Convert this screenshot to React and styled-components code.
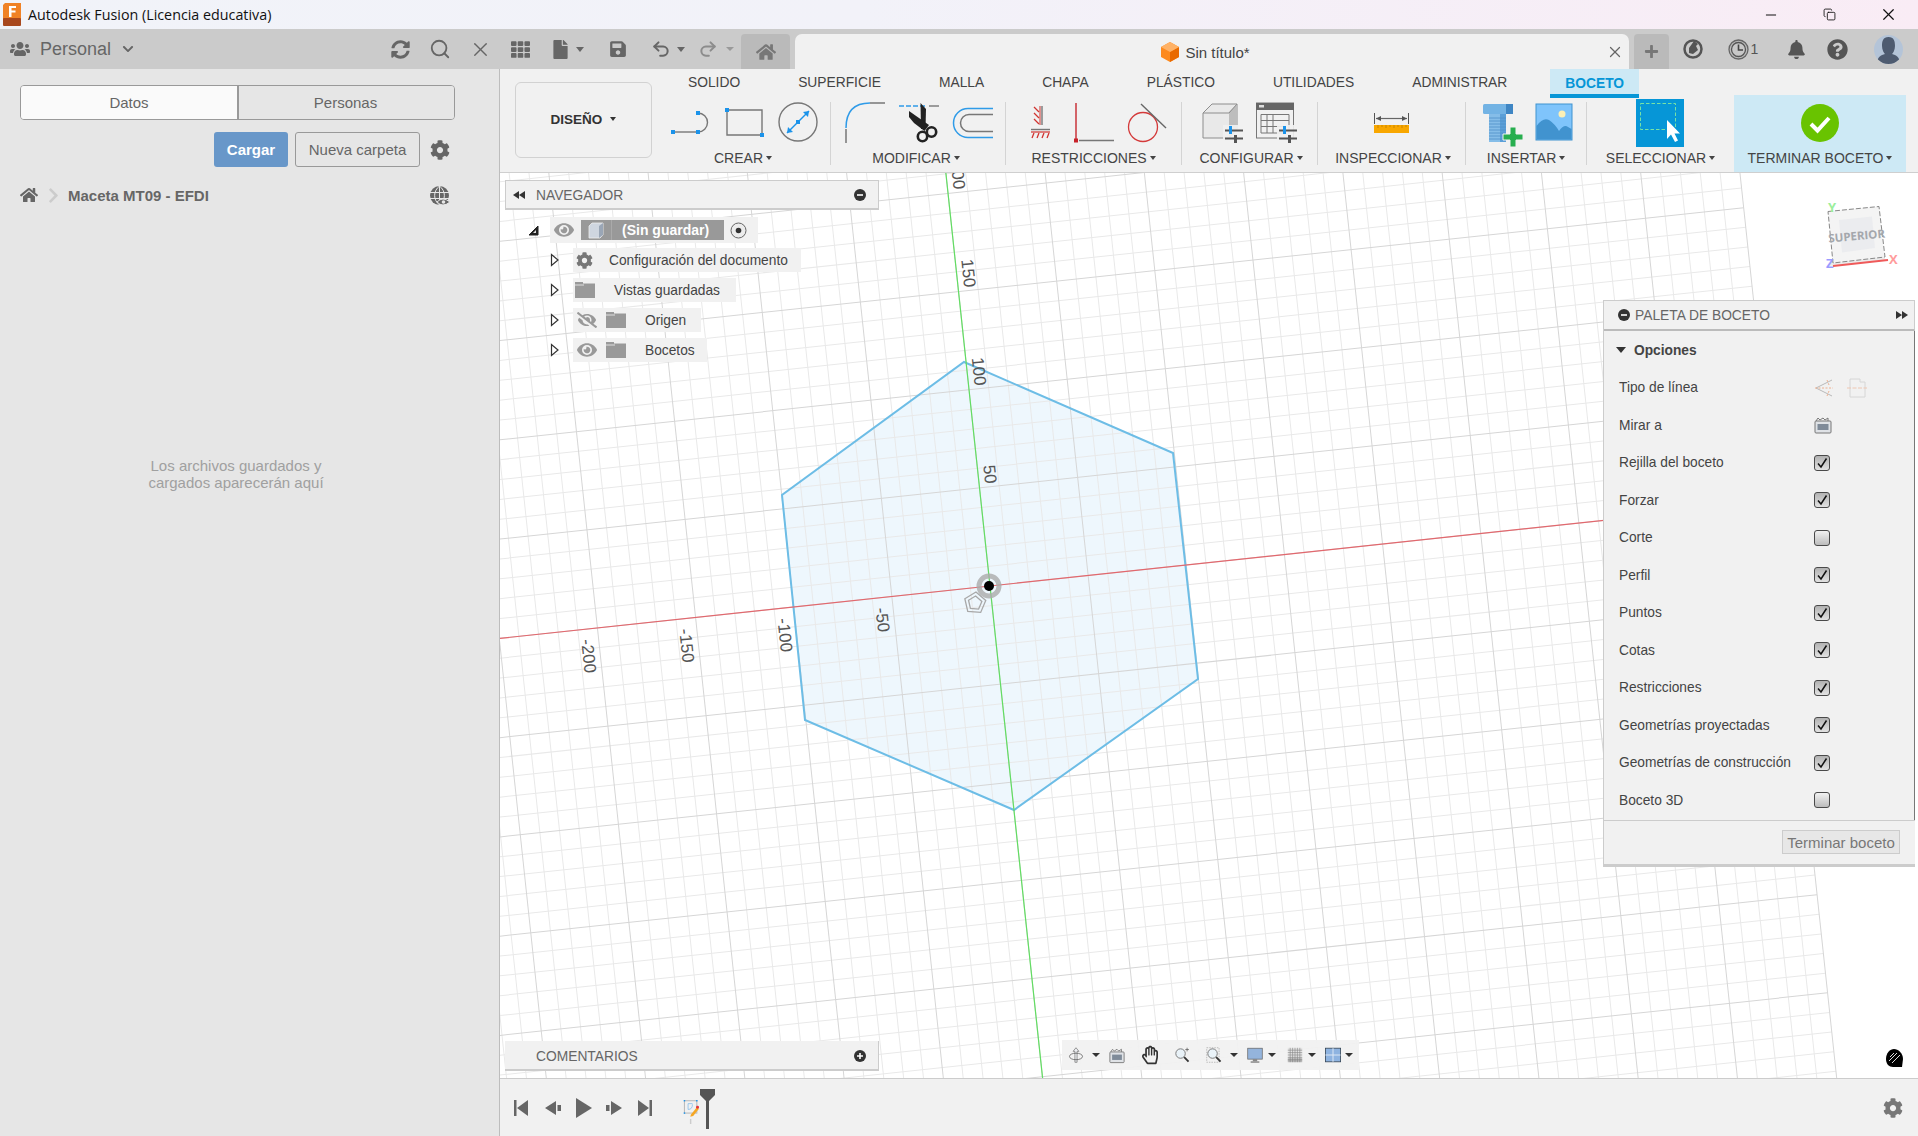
import React from 'react';
import styled, { createGlobalStyle } from 'styled-components';
import { FaUsers, FaSyncAlt, FaCog, FaHome, FaChevronDown, FaChevronRight, FaEye, FaEyeSlash, FaBell, FaQuestionCircle, FaFile, FaSave, FaPlus, FaTh, FaRegHandPaper } from 'react-icons/fa';
import { Search, X, Undo2, Redo2, Minus, Copy } from 'lucide-react';

const Global = createGlobalStyle`
  html, body { margin: 0; padding: 0; width: 1918px; height: 1136px; overflow: hidden; background: #f1f1f1; }
  body { font-family: "Liberation Sans", Arial, sans-serif; color: #444; }
  * { box-sizing: border-box; }
`;

const Page = styled.div`
  width: 1918px; height: 1136px; display: flex; flex-direction: column; overflow: hidden;
`;

/* ---------- title bar ---------- */
const TitleBar = styled.header`
  height: 29px; flex: none; display: flex; align-items: center; padding-left: 3px;
  background: linear-gradient(90deg, #f1f3f9 0%, #f2f2f9 45%, #f9ecf5 100%);
`;
const AppTitle = styled.span`
  margin-left: 7px; font-family: "Open Sans", sans-serif; font-size: 14.3px; color: #111; flex: 1; white-space: nowrap;
`;
const WinButton = styled.span`
  width: 59px; height: 29px; display: flex; align-items: center; justify-content: center; color: #111;
`;

/* ---------- top bar ---------- */
const TopBar = styled.div`
  height: 40px; flex: none; display: flex; background: #cbcbcb; color: #666;
`;
const AccountArea = styled.div`
  width: 500px; flex: none; display: flex; align-items: center; padding-left: 10px;
`;
const AccountName = styled.span`
  font-size: 18px; color: #666; margin-left: 10px; width: 82px;
`;
const AccountTools = styled.div`
  margin-left: auto; display: flex; align-items: center; height: 100%;
`;
const Slot = styled.div`
  width: ${p => p.$w}px; flex: none; height: 100%; display: flex; align-items: center; justify-content: center;
  gap: ${p => p.$gap || 0}px; color: ${p => p.$color || '#666'}; font-size: 14px;
  padding-left: ${p => p.$pl || 0}px; padding-right: ${p => p.$pr || 0}px;
`;
const Caret = styled.i`
  display: inline-block; flex: none; width: 0; height: 0;
  border-left: ${p => p.$s || 4}px solid transparent; border-right: ${p => p.$s || 4}px solid transparent;
  border-top: ${p => (p.$s || 4) * 1.2}px solid ${p => p.$c || '#555'};
`;
const SmallHomeTab = styled.div`
  width: 49px; margin: 5px 5px 0 6px; background: #bababa; border-radius: 4px 4px 0 0;
  display: flex; align-items: center; justify-content: center; color: #777;
`;
const DocTab = styled.div`
  width: 834px; margin-top: 5px; background: #f1f1f1; border-radius: 7px 7px 0 0; display: flex; align-items: center;
  position: relative; justify-content: center;
`;
const DocTitle = styled.span`
  font-size: 15px; color: #444; display: flex; align-items: center; gap: 6px; padding: 1px 13px 0 0;
`;
const DocClose = styled.span`
  position: absolute; right: 5px; top: 9px; color: #666; display: flex;
`;
const PlusTab = styled.div`
  width: 35px; margin: 5px 0 0 5px; background: #bababa; border-radius: 4px 4px 0 0; color: #777;
  display: flex; align-items: center; justify-content: center;
`;

/* ---------- body ---------- */
const Body = styled.div`
  flex: 1; display: grid; grid-template-columns: 500px 1fr; min-height: 0;
`;
const SidePanel = styled.aside`
  background: #e6e6e6; border-right: 1px solid #bdbdbd; padding: 16px 0 0 20px; display: flex; flex-direction: column; position: relative;
`;
const Segments = styled.div`
  width: 435px; height: 35px; display: flex; border: 1px solid #999; border-radius: 4px; overflow: hidden;
`;
const Segment = styled.div`
  flex: ${p => (p.$active ? '0 0 216px' : '1')}; display: flex; align-items: center; justify-content: center; font-size: 15px; color: #666;
  background: ${p => (p.$active ? '#fafafa' : '#e6e6e6')};
  & + & { border-left: 2px solid #999; padding-right: 2px; }
`;
const ActionRow = styled.div`
  margin-top: 12px; height: 35px; display: flex; align-items: center; padding-left: 194px; color: #666;
`;
const PrimaryButton = styled.button`
  width: 74px; height: 35px; border: 0; border-radius: 3px; background: #6897c9; color: #fff; font: bold 15px "Liberation Sans", sans-serif;
`;
const GhostButton = styled.button`
  width: 125px; height: 35px; margin: 0 10px 0 7px; border: 1px solid #999; border-radius: 3px; background: #e6e6e6; color: #666;
  font: 15px "Liberation Sans", sans-serif;
`;
const Crumbs = styled.div`
  margin-top: 17px; height: 22px; display: flex; align-items: center; color: #666; padding-right: 49px;
`;
const CrumbText = styled.span`
  font-weight: bold; font-size: 15px; margin-left: 6px; color: #666; flex: 1;
`;
const CrumbChevron = styled.span`
  margin-left: 7px; color: #ccc; display: flex;
`;
const GlobeSlot = styled.span`
  display: flex; padding-top: 2px;
`;
const EmptyText = styled.p`
  margin: 251px 0 0 -20px; width: 472px; text-align: center; font-size: 15px; line-height: 17px; color: #a0a0a0;
`;

const Main = styled.main`
  display: flex; flex-direction: column; min-width: 0; min-height: 0;
`;

/* ---------- ribbon ---------- */
const Ribbon = styled.div`
  height: 104px; flex: none; display: flex; background: #f1f1f1; border-bottom: 1px solid #cfcfcf; padding-left: 15px;
`;
const DesignButton = styled.div`
  width: 137px; height: 76px; margin-top: 13px; flex: none; border: 1px solid #d2d2d2; border-radius: 6px; background: #f1f1f1;
  display: flex; align-items: center; justify-content: center; gap: 8px; font-weight: bold; font-size: 13.5px; color: #333; padding-bottom: 2px;
`;
const RibbonRight = styled.div`
  margin-left: 8px; display: flex; flex-direction: column; flex: 1;
`;
const TabRow = styled.div`
  height: 29px; flex: none; display: flex; gap: 28px; padding-left: 13px;
`;
const RibbonTab = styled.div`
  padding: ${p => (p.$active ? '3px 15px 0' : '0 15px 2px')}; font-size: 13.8px; display: flex; align-items: center;
  color: ${p => (p.$active ? '#0696d7' : '#444')}; font-weight: ${p => (p.$active ? 'bold' : 'normal')};
  background: ${p => (p.$active ? '#cde9f5' : 'transparent')};
  border-bottom: ${p => (p.$active ? '4px solid #0696d7' : '0')};
`;
const ToolRow = styled.div`
  display: flex; flex: 1; align-items: flex-start;
`;
const ToolGroup = styled.div`
  flex: 0 0 ${p => p.$w}px; height: 74px; display: flex; flex-direction: column;
`;
const FinishGroup = styled(ToolGroup)`
  background: #cde9f5; margin-top: -3px; height: 77px; padding-top: 3px;
`;
const ToolIcons = styled.div`
  height: 50px; display: flex; gap: ${p => p.$gap || 0}px; padding-left: ${p => p.$pad || 0}px;
  justify-content: ${p => (p.$center ? 'center' : 'flex-start')};
`;
const ToolLabel = styled.div`
  height: 20px; display: flex; align-items: center; justify-content: center; gap: 3px; font-size: 14px; color: #444; white-space: nowrap;
  padding-left: ${p => p.$pl || 0}px; padding-right: ${p => p.$pr || 0}px;
`;
const ToolSep = styled.div`
  flex: 0 0 1px; height: 63px; margin-top: 4px; background: #d4d4d4;
`;

/* ---------- canvas ---------- */
const Canvas = styled.div`
  flex: 1; position: relative; overflow: hidden; background: #fff; min-height: 0;
`;
const GridDrawing = styled.svg`
  position: absolute; inset: 0; width: 100%; height: 100%;
`;
const AxisText = styled.text`
  font-family: "Liberation Sans", sans-serif; font-size: 17px; fill: #555;
`;
const PanelHeader = styled.div`
  height: 30px; display: flex; align-items: center; background: #f1f1f1; border: 1px solid #ccc; border-bottom-width: 2px;
  font-size: 13.8px; color: #666; padding: 1px 12px 0 7px;
`;
const HeaderText = styled.span`
  flex: 1; margin-left: ${p => p.$ml || 0}px;
`;
const NavPanel = styled.section`
  position: absolute; left: 5px; top: 7px; width: 374px;
`;
const Tree = styled.div`
  padding-top: 5px; display: flex; flex-direction: column;
`;
const TreeRow = styled.div`
  height: 30px; display: flex; align-items: center; padding-left: ${p => p.$indent}px;
`;
const Expander = styled.span`
  width: ${p => p.$w}px; flex: none; display: flex; align-items: center;
`;
const TreeItem = styled.div`
  height: ${p => p.$h || 24}px; display: flex; align-items: center; background: #f1f1f1; font-size: 13.75px; color: #444; padding: 0 ${p => p.$pr || 10}px 0 0;
`;
const TreeSlot = styled.span`
  width: ${p => p.$w}px; flex: none; display: flex; align-items: center; justify-content: center; color: ${p => p.$c || '#999'};
  padding-right: ${p => p.$pr || 0}px;
`;
const RootChip = styled.div`
  height: 20px; display: flex; align-items: center; background: #999; color: #fff; font-weight: bold; font-size: 14px;
`;
const RootCube = styled.span`
  width: 31px; height: 100%; display: flex; align-items: center; justify-content: center; border-right: 1px solid #aaa;
`;
const RootName = styled.span`
  padding: 0 15px 0 10px;
`;
const CommentPanel = styled.section`
  position: absolute; left: 5px; bottom: 7px; width: 374px; height: 30px;
`;
const CommentHeader = styled(PanelHeader)`
  border-top: 0; border-left: 0; padding: 2px 12px 0 31px;
`;
const ViewBar = styled.div`
  position: absolute; left: 562px; bottom: 8px; width: 297px; height: 30px; background: rgba(241,241,241,.95);
  display: flex; align-items: center; padding-left: 6px;
`;
const ViewSlot = styled.span`
  width: 16px; margin-left: ${p => p.$ml || 0}px; flex: none; display: flex; align-items: center; justify-content: center;
`;
const ViewCube = styled.svg`
  position: absolute; left: 1315px; top: 27px; width: 90px; height: 75px;
`;
const CubeText = styled.text`
  font-family: "Open Sans", sans-serif; font-size: 11.5px; font-weight: 700; fill: #a4a7ac;
`;
const AxisLetter = styled.text`
  font-family: "Open Sans", sans-serif; font-size: 13px; font-weight: 700; fill: ${p => p.$c};
`;
const CornerMark = styled.svg`
  position: absolute; right: 14px; bottom: 10px; width: 20px; height: 20px;
`;
const Palette = styled.section`
  position: absolute; left: 1103px; top: 127px; width: 312px; background: #f1f1f1; display: flex; flex-direction: column;
  border-left: 1px solid #ccc; border-bottom: 3px solid #ccc;
`;
const PaletteHeader = styled(PanelHeader)`
  height: 31px; padding: 0 6px 0 14px; border-left: 0; border-bottom: 2px solid #bbb;
`;
const PaletteBody = styled.div`
  border-right: 1px solid #777; padding: .5px 0 .5px;
`;
const PRow = styled.div`
  height: 37.5px; display: flex; align-items: center; padding-left: 15px; font-size: 13.75px; color: #444; position: relative;
`;
const OptionsRow = styled(PRow)`
  font-weight: bold; gap: 8px; padding-left: 12px; color: #444;
`;
const PLabel = styled.span`
  width: 195px; flex: none; white-space: nowrap;
`;
const PControls = styled.span`
  display: flex; align-items: center; gap: 13px;
`;
const Check = styled.span`
  width: 16px; height: 16px; border: 1.5px solid #4a4a4a; border-radius: 3px; display: flex; align-items: center; justify-content: center;
  background: ${p => (p.$on ? 'linear-gradient(#b2b2b2, #e2e2e2)' : 'linear-gradient(#f2f2f2, #bcbcbc)')};
`;
const PFooter = styled.div`
  height: 44px; border-top: 1px solid #ccc; display: flex; align-items: center; justify-content: flex-end; padding-right: 15px;
`;
const FinishButton = styled.button`
  width: 118px; height: 24px; padding: 0; background: #e7e7e7; border: 1px solid #ccc; color: #777; font: 15px "Liberation Sans", sans-serif;
`;

/* ---------- timeline ---------- */
const Timeline = styled.div`
  height: 58px; flex: none; background: #f1f1f1; border-top: 1px solid #ccc; display: flex; align-items: center; padding-left: 10px; position: relative; color: #666;
`;
const TimeSlot = styled.span`
  width: ${p => p.$w}px; flex: none; display: flex; align-items: center; justify-content: center;
`;
const TimelineGear = styled.span`
  margin-left: auto; margin-right: 15px; display: flex; color: #777;
`;

/* ---------- drawings ---------- */
const Ic = ({ x, w, children, y = 2, h = 50 }) => (
  <svg width={w} height={h} viewBox={`${x} ${y} ${w} ${h}`} fill="none">{children}</svg>
);
const Sq = ({ x, y, s = 4, c = '#1b93ea' }) => <rect x={x - s / 2} y={y - s / 2} width={s} height={s} fill={c} />;

const IconPolyline = () => (
  <Ic x={5} w={44}>
    <path d="M8 36H33" stroke="#777" strokeWidth="1.4" />
    <path d="M33 17a9.5 9.5 0 0 1 0 19" stroke="#777" strokeWidth="1.4" />
    <Sq x={8} y={36} /><Sq x={33} y={36} /><Sq x={33} y={17} />
  </Ic>
);
const IconRect = () => (
  <Ic x={59} w={44}>
    <path d="M62 14H97V39H62Z" stroke="#777" strokeWidth="1.4" />
    <Sq x={62} y={14} /><Sq x={97} y={39} />
  </Ic>
);
const IconCircle = () => (
  <Ic x={113} w={44}>
    <circle cx="133" cy="26" r="19" stroke="#777" strokeWidth="1.4" />
    <path d="M122 37 144 15" stroke="#1b93ea" strokeWidth="1.4" />
    <path d="M122 37l1-6 5 5zM144 15l-1 6-5-5z" fill="#1b93ea" />
    <Sq x={133} y={26} />
  </Ic>
);
const IconFillet = () => (
  <Ic x={180} w={44}>
    <path d="M182 32Q182 7 206 7" stroke="#2f9be8" strokeWidth="1.5" />
    <path d="M182 33V47M206 7H221" stroke="#777" strokeWidth="1.5" />
  </Ic>
);
const IconScissors = () => (
  <Ic x={234} w={44}>
    <path d="M235 10H261" stroke="#2f9be8" strokeWidth="1.4" strokeDasharray="5 2" />
    <path d="M265 10H275" stroke="#777" strokeWidth="1.4" />
    <path d="M256.500 7 L262 13 L261.500 33 L257 33 Z" fill="#222" />
    <path d="M245 15 L265 29 L260.500 35 L250 27 L245 21 Z" fill="#222" />
    <circle cx="258.500" cy="40.500" r="4.700" stroke="#222" strokeWidth="2.600" />
    <circle cx="267.500" cy="36" r="4.700" stroke="#222" strokeWidth="2.600" />
  </Ic>
);
const IconOffset = () => (
  <Ic x={288} w={44}>
    <path d="M329 12.5H304a14.500 14.500 0 0 0 0 29H329" stroke="#2f9be8" strokeWidth="1.5" />
    <path d="M329 18.500H305a8.500 8.500 0 0 0 0 17H329" stroke="#777" strokeWidth="1.5" />
  </Ic>
);
const IconHatch = () => (
  <Ic x={361} w={40}>
    <path d="M378 10V29" stroke="#777" strokeWidth="1.4" />
    <path d="M376 10V29" stroke="#d0332f" strokeWidth="1" />
    <path d="M370 11l5 5M370 17l5 5M370 23l5 5" stroke="#d0332f" strokeWidth="1.3" />
    <path d="M367 33.500H386" stroke="#777" strokeWidth="1.4" />
    <path d="M367 36H386" stroke="#d0332f" strokeWidth="1.2" />
    <path d="M370 37l-2 5M375 37l-2 5M380 37l-2 5M385 37l-2 5" stroke="#d0332f" strokeWidth="1.3" />
  </Ic>
);
const IconPerp = () => (
  <Ic x={407} w={46}>
    <path d="M412 7V43" stroke="#c8333a" strokeWidth="1.5" />
    <path d="M415 44.500H450" stroke="#777" strokeWidth="1.5" />
    <Sq x={412} y={44.5} c="#c8222a" />
  </Ic>
);
const IconTangent = () => (
  <Ic x={459} w={46}>
    <circle cx="479" cy="31" r="14.500" stroke="#d43a3a" strokeWidth="1.3" />
    <path d="M477 8 502 32" stroke="#666" strokeWidth="1.4" />
  </Ic>
);
const Sliders = ({ x, y }) => (
  <g>
    <rect x={x - 2} y={y - 4} width="21" height="18" fill="#f1f1f1" opacity=".9" />
    <path d={`M${x} ${y + 1.500}H${x + 18}M${x} ${y + 9.500}H${x + 18}`} stroke="#555" strokeWidth="2.2" />
    <rect x={x + 4} y={y - 3} width="3" height="8" fill="#1b93ea" />
    <rect x={x + 9} y={y + 6} width="3" height="8" fill="#555" />
  </g>
);
const IconSolid = () => (
  <Ic x={5} w={45}>
    <path d="M9 17 18 8H43V33L35 42H9Z" fill="#e9e9e9" stroke="#8d8d8d" strokeWidth="1" />
    <path d="M35 16V42L43 33V8Z" fill="#bdbdbd" />
    <path d="M9 17H35L43 8" stroke="#8d8d8d" fill="none" />
    <Sliders x={31} y={33} />
  </Ic>
);
const IconTable = () => (
  <Ic x={60} w={45}>
    <rect x="62.500" y="7" width="37" height="35" fill="#f1f1f1" stroke="#777" />
    <rect x="62" y="7" width="38" height="7" fill="#666" />
    <rect x="65" y="9" width="5" height="2.500" fill="#ddd" />
    <path d="M67 18.500H95V37M67 18.500V37H90M67 24.500H95M67 30.500H90M73 18.500V37M79 18.500V37" stroke="#777" strokeWidth="1" />
    <Sliders x={85} y={33} />
  </Ic>
);
const IconRuler = () => (
  <Ic x={177} w={42}>
    <path d="M180.500 17V28M214.500 17V28" stroke="#555" />
    <path d="M182 22.500H213" stroke="#666" strokeWidth="1.2" />
    <path d="M182 22.500l5-2.500v5zM213 22.500l-5-2.500v5z" fill="#555" />
    <rect x="180" y="29" width="35" height="8" fill="#f8a700" />
    <path d="M184 29v3M188 29v2M192 29v3M196 29v2M200 29v3M204 29v2M208 29v3M212 29v2" stroke="#b87a00" strokeWidth=".7" />
  </Ic>
);
const IconBolt = () => (
  <Ic x={287} w={43}>
    <rect x="289" y="8" width="30" height="10" rx="1.500" fill="#73b3e4" />
    <rect x="312" y="8" width="7" height="10" fill="#3f86c4" />
    <rect x="295" y="18" width="17" height="28" fill="#85bde8" />
    <rect x="306" y="18" width="6" height="28" fill="#5b9fd8" />
    <path d="M295 22h17M295 25h17M295 28h17M295 31h17M295 34h17M295 37h17M295 40h17M295 43h17" stroke="#4f8fc8" strokeWidth=".8" />
    <path d="M309 38h7v-7h6v7h7v6h-7v7h-6v-7h-7z" fill="#27ae4f" stroke="#f1f1f1" />
  </Ic>
);
const IconImage = () => (
  <Ic x={338} w={42}>
    <rect x="341" y="8" width="36" height="36" fill="#7fc4fb" stroke="#4193cf" />
    <circle cx="367" cy="18" r="3.500" fill="#fdf0b5" />
    <path d="M341.500 43.500V30Q348 21 354 24Q360 28 364 35Q369 28 373 31L376.500 33V43.500Z" fill="#4193cf" />
  </Ic>
);
const IconSelect = () => (
  <Ic x={441} w={48}>
    <rect x="441" y="3" width="48" height="48" fill="#0696d7" />
    <rect x="445.500" y="7.500" width="35" height="26" stroke="#77e2a5" strokeDasharray="3.500 2" />
    <path d="M472 24V43L476 38.500L480 46L483 44.500L479.500 37.500H485Z" fill="#fff" />
  </Ic>
);
const IconFinish = () => (
  <svg width="42" height="50" viewBox="0 0 42 50" fill="none">
    <circle cx="21" cy="25" r="19" fill="#69c300" />
    <path d="M12 26l6.500 6.500L30 20" stroke="#fff" strokeWidth="4" />
  </svg>
);
const CubeGlyph = () => (
  <svg width="18" height="20" viewBox="0 0 18 20">
    <path d="M9 0 18 5V15L9 20 0 15V5Z" fill="#fd8a1e" />
    <path d="M9 10 18 5V15L9 20Z" fill="#e96a00" />
    <path d="M9 0 18 5 9 10 0 5Z" fill="#ffb266" />
  </svg>
);
const AppLogo = () => (
  <svg width="18" height="23" viewBox="0 0 18 23">
    <path d="M2 0H18V17H0V2Z" fill="#f08226" />
    <rect y="15" width="18" height="8" rx="1" fill="#a8481e" />
    <path d="M6 3h7v2H8.500v2.500H12.500v2H8.500V14H6Z" fill="#fff" />
  </svg>
);
const MinusDot = ({ plus }) => (
  <svg width="12" height="12" viewBox="0 0 12 12">
    <circle cx="6" cy="6" r="6" fill="#333" />
    <path d={plus ? 'M3 6H9M6 3V9' : 'M3 6H9'} stroke="#fff" strokeWidth="1.600" />
  </svg>
);
const DoubleArrow = ({ dir }) => (
  <svg width="12" height="8" viewBox="0 0 12 8">
    <path d={dir === 'l' ? 'M6 0V8L0 4ZM12 0V8L6 4Z' : 'M0 0V8L6 4ZM6 0V8L12 4Z'} fill="#333" />
  </svg>
);
const TriOpen = () => (
  <svg width="10" height="14" viewBox="0 0 10 14"><path d="M1.500 1.500V12.500L8 7Z" fill="#fff" stroke="#333" strokeWidth="1.200" /></svg>
);
const TriCorner = () => (
  <svg width="11" height="11" viewBox="0 0 11 11"><path d="M10 1V10H1Z" fill="#222" stroke="#222" /><path d="M8 5V8H5Z" fill="#ddd" /></svg>
);
const Radio = () => (
  <svg width="17" height="17" viewBox="0 0 17 17"><circle cx="8.500" cy="8.500" r="7.500" fill="#ececec" stroke="#666" /><circle cx="8.500" cy="8.500" r="2.800" fill="#333" /></svg>
);
const MiniCube = () => (
  <svg width="16" height="17" viewBox="0 0 16 17">
    <path d="M1 4 4 1H15V13L12 16H1Z" fill="#cfd6e0" stroke="#eee" strokeWidth=".8" />
    <path d="M11 4V16L15 13V1Z" fill="#9aa6b6" />
  </svg>
);
const Folder = () => (
  <svg width="20" height="16" viewBox="0 0 20 16"><path d="M0 0H8V1.500H20V16H0Z" fill="#999" /><path d="M0 3H9" stroke="#f1f1f1" strokeWidth=".8" /></svg>
);
const LookAt = ({ size = 18 }) => (
  <svg width={size} height={size} viewBox="0 0 18 18">
    <path d="M2 5 4 2 6 4 9 2 11 4 14 2V5" stroke="#777" strokeWidth="1" fill="none" />
    <rect x="1" y="5" width="16" height="12" rx="1" fill="#dfe2e6" stroke="#777" />
    <rect x="3.500" y="8" width="11" height="6" fill="#7f8b99" />
  </svg>
);
const LineTypeA = () => (
  <svg width="20" height="20" viewBox="0 0 20 20" fill="none">
    <path d="M18 2 2 10 18 18" stroke="#b9b9b9" strokeWidth="1" />
    <path d="M1 10H19M13 2 15 7M13 18 15 13" stroke="#eeb08f" strokeWidth="1" strokeDasharray="2 1.500" />
  </svg>
);
const LineTypeB = () => (
  <svg width="20" height="20" viewBox="0 0 20 20" fill="none">
    <path d="M3 1H13V4H18V19H3Z" stroke="#d6d6d6" strokeWidth="1" />
    <path d="M0 10H20" stroke="#efc7b2" strokeWidth="1" strokeDasharray="4 1.500" />
  </svg>
);
const Tick = () => (
  <svg width="12" height="12" viewBox="0 0 12 12" fill="none"><path d="M2 6.500 5 10 10.500 1.500" stroke="#111" strokeWidth="1.500" /></svg>
);
const JobIcon = () => (
  <svg width="20" height="22" viewBox="0 0 20 22" fill="none">
    <circle cx="10" cy="11" r="8.500" stroke="#555" strokeWidth="2.500" />
    <path d="M6 10 11 3 15 6 13 8 15 12 10 16 6 15Z" fill="#555" />
  </svg>
);
const ClockIcon = () => (
  <svg width="21" height="21" viewBox="0 0 21 21" fill="none">
    <circle cx="10.500" cy="10.500" r="9.500" fill="#bcbcbc" stroke="#666" strokeWidth="1.300" />
    <circle cx="10.500" cy="10.500" r="7" fill="#c8c8c8" stroke="#555" strokeWidth="1.300" />
    <path d="M10.500 5.500V11H15" stroke="#444" strokeWidth="1.600" />
  </svg>
);
const Avatar = () => (
  <svg width="29" height="29" viewBox="0 0 29 29">
    <defs><clipPath id="av"><circle cx="14.500" cy="14.500" r="14.500" /></clipPath></defs>
    <g clipPath="url(#av)">
      <rect width="29" height="29" fill="#b4c4d8" />
      <path d="M14.500 2C9 2 8 6 8 11c0 4 2 7 3 8-4 1-8 3-8 10h23c0-7-4-9-8-10 1-1 3-4 3-8 0-5-1-9-6.500-9Z" fill="#4e5b70" />
    </g>
  </svg>
);
const GlobeEye = () => (
  <svg width="20" height="21" viewBox="0 0 20 21">
    <circle cx="9.500" cy="9.500" r="9.500" fill="#666" />
    <path d="M0 6.500H19M0 12.500H19M9.500 0V19M9.500 0C3 5 3 14 9.500 19M9.500 0C16 5 16 14 9.500 19" stroke="#e6e6e6" strokeWidth="1" fill="none" />
    <path d="M7 16q5.500-6 13 0q-7.500 6-13 0Z" fill="#666" stroke="#e6e6e6" />
    <circle cx="13.500" cy="16" r="1.800" fill="#e6e6e6" />
  </svg>
);
const StepIcon = ({ d, w = 16, h = 16, fill = '#666' }) => (
  <svg width={w} height={h} viewBox={`0 0 ${w} ${h}`}><path d={d} fill={fill} /></svg>
);
const SketchStamp = () => (
  <svg width="22" height="44" viewBox="0 0 22 44" fill="none">
    <rect x="2" y="12" width="17" height="17" stroke="#bbb" strokeWidth="1.500" />
    <path d="M7 16H13M7 16V24" stroke="#7ab8ea" strokeWidth="1" /><path d="M7 24Q13 24 13 17" stroke="#7ab8ea" />
    <Sq x={2} y={12} s={2} /><Sq x={19} y={12} s={2} /><Sq x={2} y={29} s={2} />
    <path d="M11 31 19 21 22 23 14 33 10 34Z" fill="#f5a623" />
    <circle cx="20" cy="21" r="2" fill="#e5343a" />
    <path d="M10.500 37V44" stroke="#ccc" strokeWidth="2" />
  </svg>
);
const Marker = () => (
  <svg width="15" height="40" viewBox="0 0 15 40"><path d="M0 0H15V6L9 12V40H6V12L0 6Z" fill="#555" /></svg>
);
const MarkerSlot = styled(TimeSlot)`
  margin-top: 3px;
`;
const OrbitIcon = () => (
  <svg width="22" height="22" viewBox="0 0 22 22" fill="none">
    <path d="M11 1 7 6H9.500V21H12.500V6H15Z" fill="#eef0f3" stroke="#666" strokeWidth=".9" />
    <ellipse cx="11" cy="13" rx="9" ry="4.500" stroke="#555" />
  </svg>
);
const ZoomIcon = ({ plus, frame }) => (
  <svg width="22" height="22" viewBox="0 0 22 22" fill="none">
    {frame && <rect x="1" y="1" width="17" height="20" stroke="#aaa" strokeDasharray="2 1.500" />}
    <circle cx="9" cy="9" r="6.500" fill="#e9f2f8" stroke="#777" strokeWidth="1.300" />
    <path d="M14 14 20 20" stroke="#333" strokeWidth="2.600" />
    {plus && <path d="M18 1V6M15.500 3.500H20.500" stroke="#555" />}
  </svg>
);
const DisplayIcon = () => (
  <svg width="20" height="21" viewBox="0 0 22 22">
    <rect x="1" y="1" width="20" height="15" fill="#94b4dc" stroke="#666" />
    <rect x="8" y="16" width="6" height="3" fill="#888" /><rect x="5" y="19" width="12" height="2" fill="#888" />
  </svg>
);
const GridIcon = () => (
  <svg width="19" height="20" viewBox="0 0 20 20" fill="none">
    <rect x="1" y="1" width="18" height="18" fill="#e4e4e4" />
    <path d="M1 4H19M1 7H19M1 10H19M1 13H19M1 16H19M4 1V19M7 1V19M10 1V19M13 1V19M16 1V19" stroke="#888" strokeWidth=".8" />
    <rect x="1" y="14" width="18" height="5" fill="#777" opacity=".4" />
  </svg>
);
const ViewsIcon = () => (
  <svg width="19" height="18" viewBox="0 0 20 20">
    <rect x=".5" y="1.500" width="19" height="17" fill="#8eb3e0" stroke="#345" />
    <path d="M10 1.500V18.500M.5 10H19.500" stroke="#dfe9f5" strokeWidth="1.200" />
  </svg>
);

/* ---------- scene ---------- */
const ORIGIN = { x: 490, y: 413 };
const TILT = -6.1;
const MINOR = 19.74;
const EXT = 40;
const range = Array.from({ length: EXT * 2 + 1 }, (_, i) => i - EXT);
const HEX = [[964, 362], [1173, 453], [1198, 679], [1014, 810], [805, 720], [782, 495]]
  .map(([x, y]) => `${x - 500},${y - 173}`).join(' ');

const Scene = () => {
  const lim = EXT * MINOR;
  const ticksY = [50, 100, 150, 200];
  const ticksX = [-50, -100, -150, -200];
  return (
    <GridDrawing viewBox="0 0 1418 905">
      <polygon points={HEX} fill="#eef7fd" />
      <g transform={`translate(${ORIGIN.x} ${ORIGIN.y}) rotate(${TILT})`}>
        {range.filter(i => i % 5 !== 0).map(i => (
          <g key={i} stroke="#e9e9e9" strokeWidth="1">
            <line x1={i * MINOR} x2={i * MINOR} y1={-lim} y2={lim} />
            <line y1={i * MINOR} y2={i * MINOR} x1={-lim} x2={lim} />
          </g>
        ))}
        {range.filter(i => i % 5 === 0).map(i => (
          <g key={i} stroke="#d6d6d6" strokeWidth="1">
            <line x1={i * MINOR} x2={i * MINOR} y1={-lim} y2={lim} />
            <line y1={i * MINOR} y2={i * MINOR} x1={-lim} x2={lim} />
          </g>
        ))}
      </g>
      <polygon points={HEX} fill="none" stroke="#6dbde6" strokeWidth="2" />
      <g transform={`translate(${ORIGIN.x} ${ORIGIN.y}) rotate(${TILT})`}>
        <line x1={-lim} x2={lim} y1="0" y2="0" stroke="#e2686e" strokeWidth="1.200" />
        <line y1={-lim} y2={lim} x1="0" x2="0" stroke="#62dd62" strokeWidth="1.200" />
        {ticksY.map(t => (
          <AxisText key={t} textAnchor="end" transform={`translate(6 ${-t * 1.974 - 3}) rotate(90)`}>{t}</AxisText>
        ))}
        {ticksX.map(t => (
          <AxisText key={t} transform={`translate(${t * 1.974 - 17.5} 10) rotate(90)`}>{t}</AxisText>
        ))}
      </g>
      <circle cx={ORIGIN.x - 1} cy={ORIGIN.y} r="10" fill="none" stroke="#aaa" strokeWidth="5" opacity=".8" />
      <circle cx={ORIGIN.x - 1} cy={ORIGIN.y} r="5" fill="#000" />
      <g transform={`translate(${975 - 500} ${603 - 173}) rotate(5)`} fill="none" stroke="#a8a8a8" strokeWidth="1.300">
        <polygon points="0,-11 10.500,-3.400 6.500,8.900 -6.500,8.900 -10.500,-3.400" />
        <polygon points="0,-7 6.700,-2.200 4.100,5.700 -4.100,5.700 -6.700,-2.200" />
      </g>
    </GridDrawing>
  );
};

const options = [
  ['Rejilla del boceto', true], ['Forzar', true], ['Corte', false], ['Perfil', true], ['Puntos', true], ['Cotas', true],
  ['Restricciones', true], ['Geometrías proyectadas', true], ['Geometrías de construcción', true], ['Boceto 3D', false],
];
const tabs = ['SOLIDO', 'SUPERFICIE', 'MALLA', 'CHAPA', 'PLÁSTICO', 'UTILIDADES', 'ADMINISTRAR'];

const GroupLabel = ({ children, pl, pr }) => <ToolLabel $pl={pl} $pr={pr}>{children}<Caret $s={3.5} $c="#444" /></ToolLabel>;

const viewTools = [
  [<OrbitIcon />, 0], [<Caret $s={4} $c="#333" />, 4], [<LookAt size={19} />, 5], [<FaRegHandPaper size={20} color="#333" />, 17],
  [<ZoomIcon plus />, 16], [<ZoomIcon frame />, 16], [<Caret $s={4} $c="#333" />, 4], [<DisplayIcon />, 5], [<Caret $s={4} $c="#333" />, 1],
  [<GridIcon />, 7], [<Caret $s={4} $c="#333" />, 1], [<ViewsIcon />, 5], [<Caret $s={4} $c="#333" />, 0],
];

export default function App() {
  return (
    <Page>
      <Global />
      <TitleBar>
        <AppLogo />
        <AppTitle>Autodesk Fusion (Licencia educativa)</AppTitle>
        <WinButton><Minus size={16} strokeWidth={1.5} /></WinButton>
        <WinButton><Copy size={13} strokeWidth={1.6} /></WinButton>
        <WinButton><X size={19} strokeWidth={1.5} /></WinButton>
      </TitleBar>

      <TopBar>
        <AccountArea>
          <FaUsers size={20} />
          <AccountName>Personal</AccountName>
          <FaChevronDown size={12} />
          <AccountTools>
            <Slot $w={40}><FaSyncAlt size={19} /></Slot>
            <Slot $w={40}><Search size={22} strokeWidth={2} /></Slot>
            <Slot $w={40}><X size={23} strokeWidth={1.4} /></Slot>
          </AccountTools>
        </AccountArea>
        <Slot $w={41}><FaTh size={19} /></Slot>
        <Slot $w={56} $gap={6} $pr={4}><FaFile size={19} /><Caret $s={4.5} $c="#666" /></Slot>
        <Slot $w={42}><FaSave size={18} /></Slot>
        <Slot $w={57} $gap={6}><Undo2 size={20} strokeWidth={2.4} /><Caret $s={4.5} $c="#666" /></Slot>
        <Slot $w={39} $gap={8} $color="#8c8c8c"><Redo2 size={20} strokeWidth={2.4} /><Caret $s={4} $c="#999" /></Slot>
        <SmallHomeTab><FaHome size={20} /></SmallHomeTab>
        <DocTab>
          <DocTitle><CubeGlyph />Sin título*</DocTitle>
          <DocClose><X size={18} strokeWidth={1.6} /></DocClose>
        </DocTab>
        <PlusTab><FaPlus size={15} /></PlusTab>
        <Slot $w={48} $color="#555"><JobIcon /></Slot>
        <Slot $w={52} $gap={2} $color="#555"><ClockIcon /><span>1</span></Slot>
        <Slot $w={54} $color="#555"><FaBell size={19} /></Slot>
        <Slot $w={28} $color="#555"><FaQuestionCircle size={21} /></Slot>
        <Slot $w={67} $pl={7}><Avatar /></Slot>
      </TopBar>

      <Body>
        <SidePanel>
          <Segments>
            <Segment $active>Datos</Segment>
            <Segment>Personas</Segment>
          </Segments>
          <ActionRow>
            <PrimaryButton>Cargar</PrimaryButton>
            <GhostButton>Nueva carpeta</GhostButton>
            <FaCog size={20} />
          </ActionRow>
          <Crumbs>
            <FaHome size={18} />
            <CrumbChevron><FaChevronRight size={17} /></CrumbChevron>
            <CrumbText>Maceta MT09 - EFDI</CrumbText>
            <GlobeSlot><GlobeEye /></GlobeSlot>
          </Crumbs>
          <EmptyText>Los archivos guardados y<br />cargados aparecerán aquí</EmptyText>
        </SidePanel>

        <Main>
          <Ribbon>
            <DesignButton>DISEÑO <Caret $s={3.5} $c="#333" /></DesignButton>
            <RibbonRight>
              <TabRow>
                {tabs.map(t => <RibbonTab key={t}>{t}</RibbonTab>)}
                <RibbonTab $active>BOCETO</RibbonTab>
              </TabRow>
              <ToolRow>
                <ToolGroup $w={170}>
                  <ToolIcons $pad={10} $gap={10}><IconPolyline /><IconRect /><IconCircle /></ToolIcons>
                  <GroupLabel pr={4}>CREAR</GroupLabel>
                </ToolGroup>
                <ToolSep />
                <ToolGroup $w={174}>
                  <ToolIcons $pad={13} $gap={10}><IconFillet /><IconScissors /><IconOffset /></ToolIcons>
                  <GroupLabel pr={4}>MODIFICAR</GroupLabel>
                </ToolGroup>
                <ToolSep />
                <ToolGroup $w={175}>
                  <ToolIcons $pad={19} $gap={6}><IconHatch /><IconPerp /><IconTangent /></ToolIcons>
                  <GroupLabel>RESTRICCIONES</GroupLabel>
                </ToolGroup>
                <ToolSep />
                <ToolGroup $w={135}>
                  <ToolIcons $pad={17} $gap={10}><IconSolid /><IconTable /></ToolIcons>
                  <GroupLabel pl={3}>CONFIGURAR</GroupLabel>
                </ToolGroup>
                <ToolSep />
                <ToolGroup $w={147}>
                  <ToolIcons $pad={53}><IconRuler /></ToolIcons>
                  <GroupLabel pl={3}>INSPECCIONAR</GroupLabel>
                </ToolGroup>
                <ToolSep />
                <ToolGroup $w={120}>
                  <ToolIcons $pad={15} $gap={9}><IconBolt /><IconImage /></ToolIcons>
                  <GroupLabel>INSERTAR</GroupLabel>
                </ToolGroup>
                <ToolSep />
                <ToolGroup $w={147}>
                  <ToolIcons $pad={49}><IconSelect /></ToolIcons>
                  <GroupLabel>SELECCIONAR</GroupLabel>
                </ToolGroup>
                <FinishGroup $w={172}>
                  <ToolIcons $center><IconFinish /></ToolIcons>
                  <GroupLabel>TERMINAR BOCETO</GroupLabel>
                </FinishGroup>
              </ToolRow>
            </RibbonRight>
          </Ribbon>

          <Canvas>
            <Scene />
            <NavPanel>
              <PanelHeader>
                <DoubleArrow dir="l" />
                <HeaderText $ml={11}>NAVEGADOR</HeaderText>
                <MinusDot />
              </PanelHeader>
              <Tree>
                <TreeRow $indent={23}>
                  <Expander $w={22}><TriCorner /></Expander>
                  <TreeItem $h={26} $pr={6}>
                    <TreeSlot $w={31} $pr={3}><FaEye size={20} /></TreeSlot>
                    <RootChip><RootCube><MiniCube /></RootCube><RootName>(Sin guardar)</RootName></RootChip>
                    <TreeSlot $w={28}><Radio /></TreeSlot>
                  </TreeItem>
                </TreeRow>
                <TreeRow $indent={45}>
                  <Expander $w={23}><TriOpen /></Expander>
                  <TreeItem $pr={13}>
                    <TreeSlot $w={22} $c="#777"><FaCog size={17} /></TreeSlot>
                    <TreeSlot $w={14} />Configuración del documento
                  </TreeItem>
                </TreeRow>
                <TreeRow $indent={45}>
                  <Expander $w={23}><TriOpen /></Expander>
                  <TreeItem $pr={16}>
                    <TreeSlot $w={24}><Folder /></TreeSlot>
                    <TreeSlot $w={17} />Vistas guardadas
                  </TreeItem>
                </TreeRow>
                <TreeRow $indent={45}>
                  <Expander $w={23}><TriOpen /></Expander>
                  <TreeItem $pr={15}>
                    <TreeSlot $w={28}><FaEyeSlash size={20} /></TreeSlot>
                    <TreeSlot $w={30}><Folder /></TreeSlot>
                    <TreeSlot $w={14} />Origen
                  </TreeItem>
                </TreeRow>
                <TreeRow $indent={45}>
                  <Expander $w={23}><TriOpen /></Expander>
                  <TreeItem $pr={12}>
                    <TreeSlot $w={28}><FaEye size={20} /></TreeSlot>
                    <TreeSlot $w={30}><Folder /></TreeSlot>
                    <TreeSlot $w={14} />Bocetos
                  </TreeItem>
                </TreeRow>
              </Tree>
            </NavPanel>

            <CommentPanel>
              <CommentHeader>
                <HeaderText>COMENTARIOS</HeaderText>
                <MinusDot plus />
              </CommentHeader>
            </CommentPanel>

            <ViewBar>
              {viewTools.map(([icon, ml], i) => <ViewSlot key={i} $ml={ml}>{icon}</ViewSlot>)}
            </ViewBar>

            <ViewCube viewBox="1815 200 90 75">
              <path d="M1829 266 1886 260 1880 252 1834 258Z" fill="#ddd" opacity=".6" />
              <path d="M1828 211.500 1879 206.500 1885 257 1833 263Z" fill="#f4f4f4" stroke="#888" strokeDasharray="5 2" />
              <path d="M1839 220 1872 216.500 1875 248 1842 252.500Z" fill="#ebecef" />
              <CubeText textAnchor="middle" transform="translate(1857 240) rotate(-5)">SUPERIOR</CubeText>
              <path d="M1833 266 1888 260" stroke="#ef5a5a" strokeWidth="2" />
              <AxisLetter $c="#ff9c9c" x="1889" y="264">X</AxisLetter>
              <AxisLetter $c="#9a9cff" x="1826" y="268">Z</AxisLetter>
              <AxisLetter $c="#9cef9c" x="1828" y="212">Y</AxisLetter>
            </ViewCube>

            <CornerMark viewBox="0 0 20 20">
              <path d="M2 11C2 5 6 1 10 1S19 5 19 11L18 19H9C5 19 2 16 2 11Z" fill="#000" />
              <path d="M5 13 13 5M8 15 16 7M6 9 10 5" stroke="#ddd" strokeWidth="1" />
            </CornerMark>

            <Palette>
              <PaletteHeader>
                <MinusDot />
                <HeaderText $ml={5}>PALETA DE BOCETO</HeaderText>
                <DoubleArrow dir="r" />
              </PaletteHeader>
              <PaletteBody>
                <OptionsRow><Caret $s={5} $c="#333" />Opciones</OptionsRow>
                <PRow>
                  <PLabel>Tipo de línea</PLabel>
                  <PControls><LineTypeA /><LineTypeB /></PControls>
                </PRow>
                <PRow>
                  <PLabel>Mirar a</PLabel>
                  <PControls><LookAt /></PControls>
                </PRow>
                {options.map(([label, on]) => (
                  <PRow key={label}>
                    <PLabel>{label}</PLabel>
                    <PControls><Check $on={on}>{on && <Tick />}</Check></PControls>
                  </PRow>
                ))}
              </PaletteBody>
              <PFooter><FinishButton>Terminar boceto</FinishButton></PFooter>
            </Palette>
          </Canvas>

          <Timeline>
            <TimeSlot $w={22}><StepIcon w={14} h={16} d="M0 0H2.500V16H0ZM14 0V16L3 8Z" /></TimeSlot>
            <TimeSlot $w={42}><StepIcon w={16} h={14} d="M11 0V14L0 7ZM12.500 4H16V10H12.500Z" /></TimeSlot>
            <TimeSlot $w={20}><StepIcon w={16} h={20} d="M0 0 16 10 0 20Z" /></TimeSlot>
            <TimeSlot $w={40}><StepIcon w={16} h={14} d="M5 0V14L16 7ZM0 4H3.500V10H0Z" /></TimeSlot>
            <TimeSlot $w={22}><StepIcon w={14} h={16} d="M14 0H11.500V16H14ZM0 0V16L11 8Z" /></TimeSlot>
            <TimeSlot $w={27} />
            <TimeSlot $w={16}><SketchStamp /></TimeSlot>
            <MarkerSlot $w={16}><Marker /></MarkerSlot>
            <TimelineGear><FaCog size={20} /></TimelineGear>
          </Timeline>
        </Main>
      </Body>
    </Page>
  );
}
